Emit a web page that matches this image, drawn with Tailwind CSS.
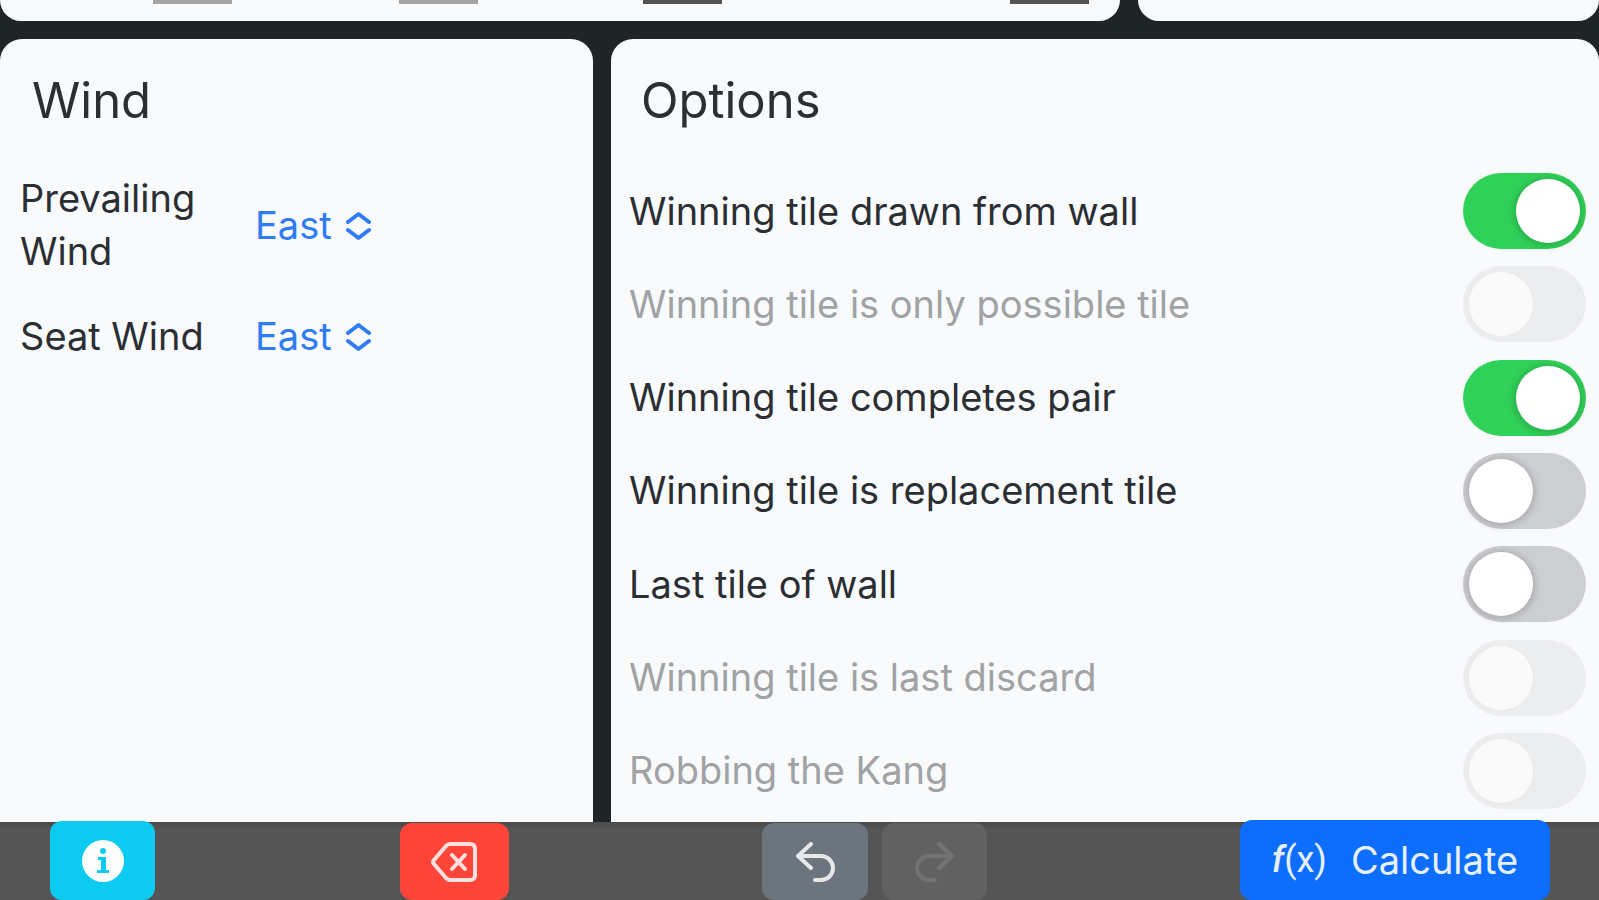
<!DOCTYPE html>
<html lang="en">
  <head>
    <meta charset="UTF-8" />
    <meta name="viewport" content="width=device-width, initial-scale=1.0" />
    <script src="https://cdn.jsdelivr.net/npm/@tailwindcss/browser@4"></script>
    <title>Mahjong Calculator</title>
  </head>
  <body class="bg-[#1f2427] font-[Inter,'Liberation_Sans',sans-serif] text-[38px] leading-[53px] text-[#2b2e32]">
    <div class="flex flex-col min-h-screen">
      <!-- bottom edge of the hand and score cards -->
      <div class="grid grid-cols-[1121fr_461fr] gap-[18px] mb-[18px]">
        <div class="h-[21px] rounded-b-[22px] bg-[#f9fafc] grid grid-cols-[246fr_244fr_368fr_110fr] pl-[153px]">
          <div class="h-1 w-[79px] bg-[#a3a3a4]"></div>
          <div class="h-1 w-[79px] bg-[#a3a3a4]"></div>
          <div class="h-1 w-[79px] bg-[#535353]"></div>
          <div class="h-1 w-[79px] bg-[#535353]"></div>
        </div>
        <div class="h-[21px] rounded-b-[22px] bg-[#f9fafc]"></div>
      </div>

      <main class="flex-1 grid grid-cols-[593fr_988fr] gap-[18px]">
        <section class="bg-[#f9fafc] rounded-t-[22px] px-5 pt-8">
          <h2 class="text-[49px] leading-[60px] px-3">Wind</h2>
          <div class="mt-[41px] grid grid-cols-[210px_auto] justify-start items-center gap-x-[25px] gap-y-8">
            <label for="prevailing">Prevailing Wind</label>
            <div class="relative w-fit text-[#2f7cf6]">
              <select id="prevailing" class="appearance-none bg-transparent h-[53px] w-[116px]">
                <option>East</option>
                <option>South</option>
                <option>West</option>
                <option>North</option>
              </select>
              <svg class="absolute right-0 top-3 w-[25px] h-[30px] pointer-events-none" viewBox="0 0 25 30" fill="none" stroke="currentColor" stroke-width="4" stroke-linecap="round" stroke-linejoin="round">
                <path d="M2 11 12.5 3 23 11M2 19l10.5 8L23 19" />
              </svg>
            </div>
            <label for="seat">Seat Wind</label>
            <div class="relative w-fit text-[#2f7cf6]">
              <select id="seat" class="appearance-none bg-transparent h-[53px] w-[116px]">
                <option>East</option>
                <option>South</option>
                <option>West</option>
                <option>North</option>
              </select>
              <svg class="absolute right-0 top-3 w-[25px] h-[30px] pointer-events-none" viewBox="0 0 25 30" fill="none" stroke="currentColor" stroke-width="4" stroke-linecap="round" stroke-linejoin="round">
                <path d="M2 11 12.5 3 23 11M2 19l10.5 8L23 19" />
              </svg>
            </div>
          </div>
        </section>

        <section class="bg-[#f9fafc] rounded-t-[22px] pt-8 pb-[13px] pl-[18px] pr-[13px] flex flex-col">
          <h2 class="text-[49px] leading-[60px] px-3">Options</h2>
          <div class="mt-[42px] flex-1 flex flex-col justify-between">
            <label class="flex items-center justify-between">
              Winning tile drawn from wall
              <input type="checkbox" role="switch" checked class="appearance-none shrink-0 flex w-[123px] h-[76px] p-[6px] rounded-full bg-[#cdced1] checked:bg-[#30d158] checked:justify-end before:block before:size-16 before:rounded-full before:bg-white before:shadow-[0_1px_6px_3px_rgba(0,0,0,0.14)]" />
            </label>
            <label class="flex items-center justify-between text-[#a0a2a4]">
              Winning tile is only possible tile
              <input type="checkbox" role="switch" disabled class="appearance-none shrink-0 flex w-[123px] h-[76px] p-[6px] rounded-full bg-[#ecedef] before:block before:size-16 before:rounded-full before:bg-[#fafafa] before:shadow-[0_0_4px_1px_rgba(0,0,0,0.02)]" />
            </label>
            <label class="flex items-center justify-between">
              Winning tile completes pair
              <input type="checkbox" role="switch" checked class="appearance-none shrink-0 flex w-[123px] h-[76px] p-[6px] rounded-full bg-[#cdced1] checked:bg-[#30d158] checked:justify-end before:block before:size-16 before:rounded-full before:bg-white before:shadow-[0_1px_6px_3px_rgba(0,0,0,0.14)]" />
            </label>
            <label class="flex items-center justify-between">
              Winning tile is replacement tile
              <input type="checkbox" role="switch" class="appearance-none shrink-0 flex w-[123px] h-[76px] p-[6px] rounded-full bg-[#cdced1] checked:bg-[#30d158] checked:justify-end before:block before:size-16 before:rounded-full before:bg-white before:shadow-[0_1px_6px_3px_rgba(0,0,0,0.14)]" />
            </label>
            <label class="flex items-center justify-between">
              Last tile of wall
              <input type="checkbox" role="switch" class="appearance-none shrink-0 flex w-[123px] h-[76px] p-[6px] rounded-full bg-[#cdced1] checked:bg-[#30d158] checked:justify-end before:block before:size-16 before:rounded-full before:bg-white before:shadow-[0_1px_6px_3px_rgba(0,0,0,0.14)]" />
            </label>
            <label class="flex items-center justify-between text-[#a0a2a4]">
              Winning tile is last discard
              <input type="checkbox" role="switch" disabled class="appearance-none shrink-0 flex w-[123px] h-[76px] p-[6px] rounded-full bg-[#ecedef] before:block before:size-16 before:rounded-full before:bg-[#fafafa] before:shadow-[0_0_4px_1px_rgba(0,0,0,0.02)]" />
            </label>
            <label class="flex items-center justify-between text-[#a0a2a4]">
              Robbing the Kang
              <input type="checkbox" role="switch" disabled class="appearance-none shrink-0 flex w-[123px] h-[76px] p-[6px] rounded-full bg-[#ecedef] before:block before:size-16 before:rounded-full before:bg-[#fafafa] before:shadow-[0_0_4px_1px_rgba(0,0,0,0.02)]" />
            </label>
          </div>
        </section>
      </main>

      <footer class="h-[78px] pl-[50px] pr-[49px] bg-linear-to-b from-[#4a4a4b] to-[#555556] to-10% grid grid-cols-[350fr_363fr_478fr_310fr] items-end content-end">
        <button aria-label="Info" class="w-[105px] h-[79px] rounded-xl bg-[#0dcaf0] flex items-center justify-center">
          <svg class="size-[42px]" viewBox="0 0 42 42">
            <circle cx="21" cy="21" r="21" fill="#fff" />
            <circle cx="21" cy="11" r="3" fill="#0dcaf0" />
            <path d="M16 17h8v13h3v3H15v-3h4V20h-3z" fill="#0dcaf0" />
          </svg>
        </button>
        <button aria-label="Clear hand" class="w-[109px] h-[77px] rounded-xl bg-[#ff453a] flex items-center justify-center">
          <svg class="w-[46px] h-10" viewBox="0 0 46 40" fill="none" stroke="#ffe0de" stroke-width="4" stroke-linecap="round" stroke-linejoin="round">
            <path d="M19 2h20q5 0 5 5v26q0 5-5 5H19q-2 0-4-2L3 22q-2-2 0-4L15 4q2-2 4-2z" />
            <path d="m21 13 13 14M34 13 21 27" />
          </svg>
        </button>
        <div class="flex gap-[14px]">
          <button aria-label="Undo" class="w-[106px] h-[77px] rounded-xl bg-[#6c757d] text-[#e6e8ea] flex items-center justify-center">
            <svg class="size-10" viewBox="0 0 40 40" fill="none" stroke="currentColor" stroke-width="4" stroke-linecap="round" stroke-linejoin="round">
              <path d="M16 2 3 14l13 12M3 14h23a12 12 0 0 1 0 24h-6" />
            </svg>
          </button>
          <button aria-label="Redo" disabled class="w-[105px] h-[77px] rounded-xl bg-[#616162] text-[#737374] flex items-center justify-center">
            <svg class="size-10" viewBox="0 0 40 40" fill="none" stroke="currentColor" stroke-width="4" stroke-linecap="round" stroke-linejoin="round">
              <path d="m24 2 13 12-13 12M37 14H14a12 12 0 0 0 0 24h6" />
            </svg>
          </button>
        </div>
        <button class="w-[310px] h-20 rounded-xl bg-[#0d6efd] text-[#e7f0ff] flex items-center justify-center gap-6">
          <span class="text-[36px] font-[Roboto,sans-serif]"><i class="font-medium">f</i>(x)</span>
          Calculate
        </button>
      </footer>
    </div>
  </body>
</html>
